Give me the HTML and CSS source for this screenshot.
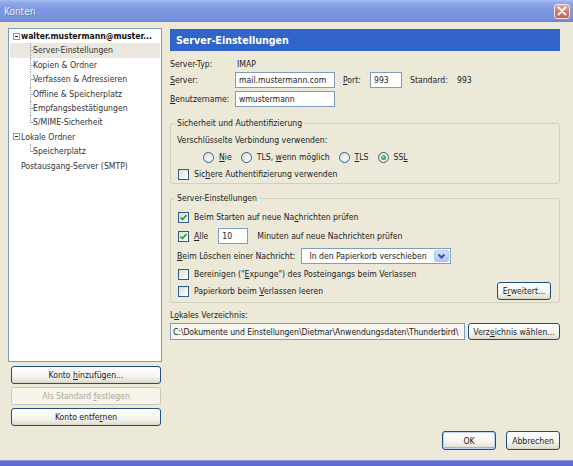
FILE: index.html
```html
<!DOCTYPE html>
<html lang="de">
<head>
<meta charset="utf-8">
<title>Konten</title>
<link rel="stylesheet" href="styles.css">
</head>
<body>
<div class="window">
  <div class="titlebar">
    <span class="title">Konten</span>
    <span class="close"><svg width="10" height="10" viewBox="0 0 10 10"><path d="M1.5 1.5 L8.5 8.5 M8.5 1.5 L1.5 8.5" stroke="#fff" stroke-width="2" stroke-linecap="round"/></svg></span>
  </div>
  <div class="main">
    <div class="left">
      <div class="tree">
        <div class="node"><span class="exp"></span><b>walter.mustermann@muster...</b></div>
        <div class="children">
          <div class="leaf sel">Server-Einstellungen</div>
          <div class="leaf">Kopien &amp; Ordner</div>
          <div class="leaf">Verfassen &amp; Adressieren</div>
          <div class="leaf">Offline &amp; Speicherplatz</div>
          <div class="leaf">Empfangsbestätigungen</div>
          <div class="leaf">S/MIME-Sicherheit</div>
        </div>
        <div class="node"><span class="exp"></span><span>Lokale Ordner</span></div>
        <div class="children">
          <div class="leaf">Speicherplatz</div>
        </div>
        <div class="node plain">Postausgang-Server (SMTP)</div>
      </div>
      <div class="left-buttons">
        <button class="btn">Konto <u>h</u>inzufügen...</button>
        <button class="btn disabled">Als Standard <u>f</u>estlegen</button>
        <button class="btn">Konto entfe<u>r</u>nen</button>
      </div>
    </div>

    <div class="right">
      <div class="panel-head">Server-Einstellungen</div>

      <div class="row r-type"><span class="lbl">Server-Typ:</span><span class="val">IMAP</span></div>
      <div class="row r-server">
        <span class="lbl"><u>S</u>erver:</span>
        <span class="tb w-server">mail.mustermann.com</span>
        <span class="lbl-port"><u>P</u>ort:</span>
        <span class="tb w-port">993</span>
        <span class="lbl-std">Standard:</span>
        <span>993</span>
      </div>
      <div class="row r-user">
        <span class="lbl"><u>B</u>enutzername:</span>
        <span class="tb w-server">wmustermann</span>
      </div>

      <fieldset class="group g-sec">
        <legend>Sicherheit und Authentifizierung</legend>
        <div class="line l-first">Verschlüsselte Verbindung verwenden:</div>
        <div class="line radios">
          <span class="opt"><span class="radio"></span><span><u>N</u>ie</span></span>
          <span class="opt"><span class="radio"></span><span>TLS, <u>w</u>enn möglich</span></span>
          <span class="opt"><span class="radio"></span><span><u>T</u>LS</span></span>
          <span class="opt"><span class="radio on"></span><span>SS<u>L</u></span></span>
        </div>
        <div class="line chk"><span class="check"></span><span>Sic<u>h</u>ere Authentifizierung verwenden</span></div>
      </fieldset>

      <fieldset class="group g-srv">
        <legend>Server-Einstellungen</legend>
        <div class="line chk s1"><span class="check on"><svg width="9" height="9" viewBox="0 0 9 9"><polyline points="1.5,4.5 3.5,6.5 7.5,2" fill="none" stroke="#21a121" stroke-width="1.7"/></svg></span><span>Beim Starten auf neue Na<u>c</u>hrichten prüfen</span></div>
        <div class="line chk s2"><span class="check on"><svg width="9" height="9" viewBox="0 0 9 9"><polyline points="1.5,4.5 3.5,6.5 7.5,2" fill="none" stroke="#21a121" stroke-width="1.7"/></svg></span><span><u>A</u>lle</span><span class="tb w-min">10</span><span class="min-lbl">Minuten auf neue Nachrichten prüfen</span></div>
        <div class="line s3"><span><u>B</u>eim Löschen einer Nachricht:</span>
          <span class="select"><span class="select-text">In den Papierkorb verschieben</span><span class="select-btn"><svg width="9" height="7" viewBox="0 0 9 7"><polyline points="1.5,1.5 4.5,4.5 7.5,1.5" fill="none" stroke="#3d5590" stroke-width="2"/></svg></span></span>
        </div>
        <div class="line chk s4"><span class="check"></span><span>Bereinigen ("<u>E</u>xpunge") des Posteingangs beim Verlassen</span></div>
        <div class="line chk s5"><span class="check"></span><span>Papierkorb beim <u>V</u>erlassen leeren</span><button class="btn b-adv">E<u>r</u>weitert...</button></div>
      </fieldset>

      <div class="row r-dir-lbl"><span>L<u>o</u>kales Verzeichnis:</span></div>
      <div class="row r-dir">
        <span class="tb path"><span>C:\Dokumente und Einstellungen\Dietmar\Anwendungsdaten\Thunderbird\</span></span>
        <button class="btn b-dir">Verz<u>e</u>ichnis wählen...</button>
      </div>

      <div class="spacer"></div>
      <div class="dialog-buttons">
        <button class="btn b-ok default">OK</button>
        <button class="btn b-ok">Abbrechen</button>
      </div>
    </div>
  </div>
  <div class="bottombar"></div>
</div>
</body>
</html>
```

FILE: styles.css
```css
* { box-sizing: border-box; }
html, body { margin: 0; padding: 0; }
body {
  width: 573px;
  height: 466px;
  overflow: hidden;
  background: #ece9d8;
  font-family: "DejaVu Sans Condensed", "DejaVu Sans", sans-serif;
  font-stretch: condensed;
  font-size: 8.6px;
  color: #222;
}
u { text-decoration-thickness: 1px; text-underline-offset: 1px; }

.window { display: flex; flex-direction: column; height: 466px; }

.titlebar {
  flex: none;
  height: 22px;
  display: flex;
  align-items: center;
  justify-content: space-between;
  padding: 0 3px 0 4px;
  background: linear-gradient(#a9bef1 0, #8ea7e8 3px, #7d98e0 45%, #7792dd 85%, #6a84d6 100%);
}
.title {
  color: #e8eeff;
  font-size: 10px;
  text-shadow: 1px 1px 0 rgba(70, 90, 170, 0.45);
}
.close {
  width: 16px;
  height: 15px;
  border: 1px solid #f3e6e6;
  border-radius: 3px;
  background: linear-gradient(#e9a699, #d3786a 50%, #c9604f);
  display: flex;
  align-items: center;
  justify-content: center;
}

.main {
  flex: 1;
  display: flex;
  gap: 8px;
  padding: 6px 13px 0 8px;
}

/* left column */
.left { width: 154px; flex: none; display: flex; flex-direction: column; }
.tree {
  height: 334px;
  background: #fff;
  border: 1px solid #7f9db9;
  color: #333;
}
.node, .leaf {
  height: 14.4px;
  line-height: 14.4px;
  white-space: nowrap;
  display: flex;
  align-items: center;
}
.node b { color: #111; }
.exp {
  width: 7px;
  height: 7px;
  margin: 0 1px 0 4px;
  border: 1px solid #8c9cb5;
  background: #fff;
  display: flex;
  align-items: center;
  justify-content: center;
}
.exp::before { content: ""; width: 3px; height: 1px; background: #222; }
.node.plain { padding-left: 12px; }
.leaf { position: relative; padding-left: 24px; margin-right: 1px; }
.leaf::before {
  content: "";
  position: absolute;
  left: 21px;
  top: 0;
  bottom: 0;
  border-left: 1px dotted #a0a0a0;
}
.leaf:last-child::before { bottom: 7px; }
.leaf::after {
  content: "";
  position: absolute;
  left: 22px;
  top: 7px;
  width: 2px;
  border-top: 1px dotted #a0a0a0;
}
.leaf.sel { background: #e9e7de; margin-left: 1px; padding-left: 23px; }
.leaf.sel::before { left: 20px; }
.leaf.sel::after { left: 21px; }

.left-buttons {
  display: flex;
  flex-direction: column;
  gap: 3px;
  margin-top: 4px;
  padding: 0 1px 0 3px;
}

.btn {
  font: inherit;
  color: #222;
  height: 18px;
  padding: 0 4px;
  border: 1px solid #1f4e82;
  border-radius: 3px;
  background: linear-gradient(#ffffff, #f4f3ee 60%, #e3e0d4 92%, #d6d0c5);
  white-space: nowrap;
  text-align: center;
}
.btn.disabled {
  color: #aca899;
  border-color: #c9c7ba;
  background: #f5f4ea;
}

/* right column */
.right {
  flex: 1;
  display: flex;
  flex-direction: column;
  padding-top: 1px;
  min-width: 0;
}
.panel-head {
  height: 22px;
  flex: none;
  background: #3064c8;
  color: #fff;
  font-weight: bold;
  font-size: 10.6px;
  display: flex;
  align-items: center;
  padding-left: 6px;
}
.row { display: flex; align-items: center; white-space: nowrap; }
.lbl { width: 65px; flex: none; }
.r-type { height: 14px; margin-top: 6px; }
.r-type .val { padding-left: 2px; }
.r-server { height: 16px; margin-top: 1px; }
.r-user { height: 16px; margin-top: 3px; }

.tb {
  height: 16px;
  border: 1px solid #7f9db9;
  background: #fff;
  display: flex;
  align-items: center;
  padding: 0 3px;
  white-space: nowrap;
  overflow: hidden;
}
.w-server { width: 100px; }
.lbl-port { margin-left: 8px; width: 27px; }
.w-port { width: 32px; }
.lbl-std { margin-left: 8px; width: 47px; }

.group {
  margin: 0;
  padding: 0 6px 2px 6px;
  border: 1px solid #d0d0bf;
  border-radius: 3px;
  min-width: 0;
}
.group legend {
  line-height: 13px;
  padding: 0 2px;
  margin-left: -2px;
  color: #222;
}
.g-sec { margin-top: 10px; }
.g-srv { margin-top: 8px; }
.line { display: flex; align-items: center; white-space: nowrap; height: 14px; }
.g-sec .l-first { margin-top: 3px; }
.radios { margin-top: 3px; padding-left: 26px; gap: 9px; }
.opt { display: flex; align-items: center; gap: 5px; }
.g-sec .chk { margin-top: 3px; }
.chk { padding-left: 1px; }

.check {
  width: 11px;
  height: 11px;
  flex: none;
  margin-right: 5px;
  border: 1px solid #2f5b8c;
  background: linear-gradient(135deg, #dcdcd6, #f6f6f3 70%, #fff);
  display: flex;
  align-items: center;
  justify-content: center;
}
.radio {
  width: 11px;
  height: 11px;
  flex: none;
  border: 1px solid #2f5b8c;
  border-radius: 50%;
  background: linear-gradient(135deg, #dcdcd6, #f6f6f3 70%, #fff);
  display: flex;
  align-items: center;
  justify-content: center;
}
.radio.on::after {
  content: "";
  width: 5px;
  height: 5px;
  border-radius: 50%;
  background: radial-gradient(circle at 35% 35%, #8be08b, #21a121 70%);
}

.g-srv .s1 { margin-top: 5px; }
.g-srv .s2 { margin-top: 4px; height: 16px; }
.w-min { width: 30px; height: 16px; margin-left: 10px; }
.min-lbl { margin-left: 9px; }
.g-srv .s3 { margin-top: 4px; height: 16px; padding-left: 0; }
.select {
  margin-left: 6px;
  width: 150px;
  height: 16px;
  border: 1px solid #7f9db9;
  background: #fff;
  display: flex;
  align-items: stretch;
}
.select-text { flex: 1; display: flex; align-items: center; padding-left: 7px; }
.select-btn {
  width: 15px;
  margin: 1px;
  border-radius: 2px;
  border: 1px solid #b0c6f3;
  background: linear-gradient(#d4e1fc, #aec5f6);
  display: flex;
  align-items: center;
  justify-content: center;
}
.g-srv .s4 { margin-top: 3px; }
.g-srv .s5 { margin-top: 1px; height: 18px; }
.b-adv { margin-left: auto; margin-right: 2px; width: 54px; padding: 0; }

.r-dir-lbl { height: 14px; margin-top: 5px; }
.r-dir { margin-top: 1px; height: 17px; gap: 3px; }
.path { flex: 1; height: 17px; background: #f6f5f0; min-width: 0; padding-left: 2px; letter-spacing: -0.05px; }
.b-dir { width: 92px; height: 17px; flex: none; padding: 0; }

.spacer { flex: 1; }
.dialog-buttons {
  display: flex;
  justify-content: flex-end;
  gap: 10px;
  margin-bottom: 10px;
}
.b-ok { width: 54px; height: 19px; padding: 0; }
.b-ok.default { box-shadow: inset 0 0 0 1px #bcd0f4, inset 0 -1px 0 1px #98b4ec; }

.bottombar {
  flex: none;
  height: 6px;
  background: linear-gradient(#8a93e0 0, #8a93e0 1px, #6670d6 1px, #5f69d2);
}
```
